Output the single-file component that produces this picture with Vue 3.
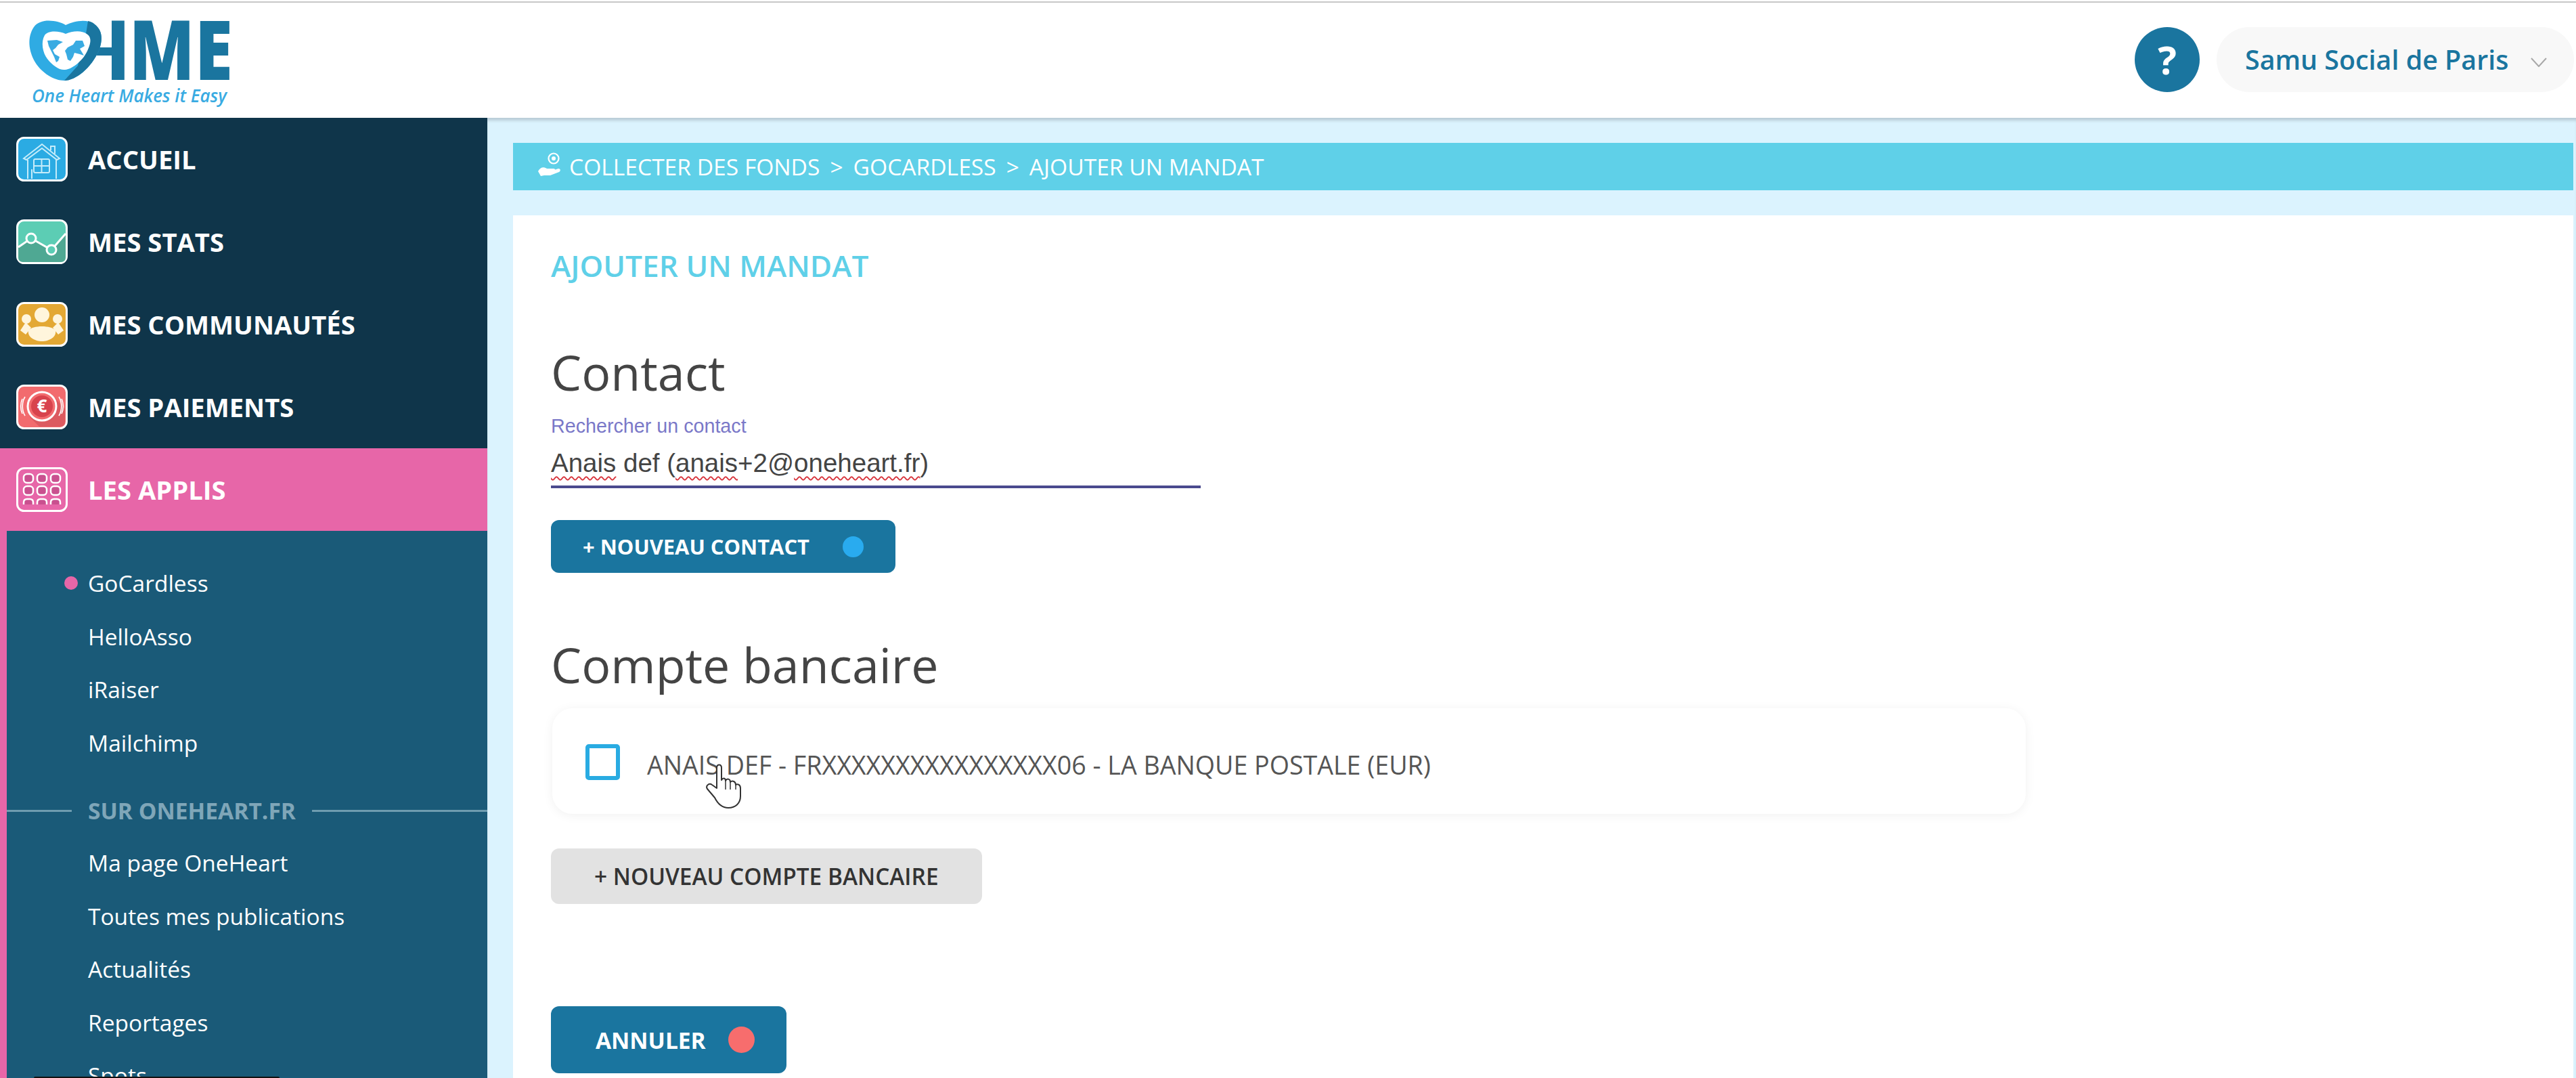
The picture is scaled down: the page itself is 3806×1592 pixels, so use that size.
<template>
  <div class="page">
    <header class="header">
      <div class="top-line"></div>
      <div class="header-row">
        <svg class="logo" width="360" height="160" viewBox="0 0 360 160">
          <defs>
            <clipPath id="logo-h">
              <path d="M143 70H165V0H200V130H165V82H143Z" />
            </clipPath>
          </defs>
          <g transform="translate(0,-4)">
            <g clip-path="url(#logo-h)">
              <text transform="translate(116,118) scale(0.8,1)" class="logo-letter">H</text>
            </g>
            <text transform="translate(191,118) scale(0.81,1)" class="logo-letter">M</text>
            <text transform="translate(288,118) scale(0.826,1)" class="logo-letter">E</text>
            <path fill="#2fabe3" d="M97 37C85 30 60 26 50 40C40 55 42 75 52 92C62 108 80 119 95 119C112 119 135 100 146 75C152 60 152 45 140 36C128 27 110 31 97 37Z" />
            <path fill="#1a759f" d="M130 31C134 32 137 33 140 36C152 45 152 60 146 75C135 100 112 119 95 119L115 97L127 50Z" />
            <path fill="#fff" d="M97 50C88 46 72 44 66 52C60 62 63 78 70 87C78 97 88 104 96 103C108 102 124 88 130 73C135 62 135 54 128 50C120 44 106 46 97 50Z" />
            <path fill="#39abe2" d="M70 60L84 59L93 62L86 66L82 71L78 74L81 80L88 84L86 90L83 92L80 84L76 76L72 68Z" />
            <path fill="#39abe2" d="M96 75L100 70L108 66L112 60L122 60L125 68L118 72L124 82L118 80L110 78L108 84L104 90L100 88L98 80Z" />
            <text x="47" y="151" class="logo-tag" textLength="288" lengthAdjust="spacingAndGlyphs">One Heart Makes it Easy</text>
          </g>
        </svg>
        <div class="header-right">
          <div class="help">?</div>
          <div class="org">
            <span>Samu Social de Paris</span>
            <svg width="24" height="14" viewBox="0 0 24 14"><path d="M1 1L12 13L23 1" fill="none" stroke="#a8a8a8" stroke-width="2" /></svg>
          </div>
        </div>
      </div>
    </header>

    <div class="layout">
      <aside class="sidebar">
        <nav>
          <div v-for="item in mainNav" :key="item.label" class="nav-row" :class="{ active: item.icon === 'apps' }">
            <svg class="nav-icon" width="76" height="66" viewBox="0 0 76 66">
              <rect x="1.5" y="1.5" width="73" height="63" rx="10" :fill="item.color" stroke="#fff" stroke-width="3" />
              <g v-if="item.icon === 'home'" fill="none" stroke="#c5ecfa" stroke-width="2">
                <path d="M11 32L38 11L64 32L60 34L38 17L15 34Z" />
                <path d="M51 20V14H57V25" />
                <path d="M17 34V62M59 34V62M23 48V62" />
                <rect x="26" y="33" width="23" height="20" rx="2" />
                <path d="M37.5 33V53M26 43H49" />
              </g>
              <g v-else-if="item.icon === 'stats'">
                <path fill="#4fa893" d="M3 41L22 28L52 45L73 21V56Q73 63 66 63H10Q3 63 3 56Z" />
                <path d="M3 41L22 28L52 45L73 21" fill="none" stroke="#fff" stroke-width="3" />
                <circle cx="22" cy="28" r="7" fill="#5ccdb4" stroke="#fff" stroke-width="3" />
                <circle cx="52" cy="45" r="7" fill="#5ccdb4" stroke="#fff" stroke-width="3" />
              </g>
              <g v-else-if="item.icon === 'people'" fill="#fff5dc">
                <circle cx="15" cy="25" r="7" />
                <circle cx="61" cy="25" r="7" />
                <path d="M6 42L14 30L22 38L14 48ZM70 42L62 30L54 38L62 48Z" />
                <circle cx="38" cy="19" r="12" stroke="#e3a834" stroke-width="2" />
                <path d="M18 42C24 34 52 34 58 42C60 52 48 58 38 58C28 58 16 52 18 42Z" />
              </g>
              <g v-else-if="item.icon === 'money'">
                <path fill="#dc5a60" d="M52 14L72 36V55Q72 62 65 62H34L20 48Z" />
                <circle cx="38" cy="32" r="21" fill="#f26b6e" stroke="#fff" stroke-width="3" />
                <circle cx="38" cy="32" r="16" fill="#d8434d" />
                <text x="38" y="41" class="euro">€</text>
                <path d="M13 18C8 26 8 38 13 46M9 21C6 28 6 36 9 43M63 18C68 26 68 38 63 46M67 21C70 28 70 36 67 43" fill="none" stroke="#fff" stroke-width="1.6" />
              </g>
              <g v-else fill="#c9508f" stroke="#fff" stroke-width="2.5">
                <template v-for="x in [11, 31, 51]" :key="x">
                  <rect :x="x" y="10" width="14" height="13" rx="5" />
                  <rect :x="x" y="28" width="14" height="13" rx="5" />
                  <path :d="`M${x} 55V52Q${x} 47 ${x + 5} 47H${x + 9}Q${x + 14} 47 ${x + 14} 52V55`" />
                </template>
              </g>
            </svg>
            <span class="nav-label">{{ item.label }}</span>
          </div>
        </nav>
        <div class="sub">
          <div v-for="(name, i) in apps" :key="name" class="sub-item">
            <span v-if="i === 0" class="sub-dot"></span>{{ name }}
          </div>
          <div class="sub-title"><span>SUR ONEHEART.FR</span></div>
          <div v-for="name in pages" :key="name" class="sub-item">{{ name }}</div>
        </div>
        <div class="tooltip-edge"></div>
      </aside>

      <main class="main">
        <div class="crumbs">
          <svg class="crumb-icon" width="34" height="36" viewBox="0 0 34 36">
            <circle cx="23" cy="10" r="7.5" fill="none" stroke="#fff" stroke-width="2.2" />
            <circle cx="23" cy="10" r="3" fill="#fff" />
            <path fill="#fff" d="M0 29C3 23 8 22 13 25L23 25C26 25 26 29 23 29L18 29L30 25C34 25 33 29 31 30L18 35H9L4 36Z" />
          </svg>
          <span>COLLECTER DES FONDS</span><span class="sep">&gt;</span>
          <span>GOCARDLESS</span><span class="sep">&gt;</span>
          <span>AJOUTER UN MANDAT</span>
        </div>

        <section class="card">
          <div class="card-title">AJOUTER UN MANDAT</div>

          <h2 class="heading contact-heading">Contact</h2>
          <div class="field-label">Rechercher un contact</div>
          <div class="field">
            <span class="typo">Anais</span> def (<span class="typo">anais</span>+2@<span class="typo">oneheart.fr</span>)
          </div>
          <div class="btn btn-blue btn-contact">
            <span>+ NOUVEAU CONTACT</span><i class="dot dot-blue"></i>
          </div>

          <h2 class="heading account-heading">Compte bancaire</h2>
          <div class="account">
            <span class="check"></span>
            <span class="account-text">ANAIS DEF - FRXXXXXXXXXXXXXXXX06 - LA BANQUE POSTALE (EUR)</span>
            <svg class="hand" width="54" height="66" viewBox="0 0 54 66">
              <path fill="#fff" stroke="#333" stroke-width="2" stroke-linejoin="round" d="M17 36V6C17 0 24 0 24 6V24C26 20 30 21 30 25C32 21 37 22 37 27C40 24 45 26 45 31C48 29 52 31 52 36V48C52 58 45 65 34 65C24 65 18 58 14 50L3 37C0 32 6 28 10 31Z" />
              <path fill="none" stroke="#333" stroke-width="1.5" d="M30 25V38M37 27V38M45 31V38" />
            </svg>
          </div>
          <div class="btn btn-grey">+ NOUVEAU COMPTE BANCAIRE</div>
          <div class="btn btn-blue btn-cancel">
            <span>ANNULER</span><i class="dot dot-red"></i>
          </div>
        </section>
      </main>
    </div>
  </div>
</template>

<script setup>
const mainNav = [
  { label: 'ACCUEIL', icon: 'home', color: '#2babe3' },
  { label: 'MES STATS', icon: 'stats', color: '#5ccdb4' },
  { label: 'MES COMMUNAUTÉS', icon: 'people', color: '#e3a834' },
  { label: 'MES PAIEMENTS', icon: 'money', color: '#f26b6e' },
  { label: 'LES APPLIS', icon: 'apps', color: '#e766a8' },
]
const apps = ['GoCardless', 'HelloAsso', 'iRaiser', 'Mailchimp']
const pages = ['Ma page OneHeart', 'Toutes mes publications', 'Actualités', 'Reportages', 'Spots']
</script>

<style>
html, body {
  overflow: hidden;
  background: #fff;
}
</style>

<style scoped>
.page {
  width: 3806px;
  height: 1592px;
  overflow: hidden;
  display: flex;
  flex-direction: column;
  font-family: "Open Sans", sans-serif;
}

.header {
  height: 174px;
  flex: none;
  background: #fff;
}

.top-line {
  height: 2px;
  margin-top: 2px;
  background: #c8c8c8;
}

.header-row {
  height: 170px;
  display: flex;
  justify-content: space-between;
}

.logo-letter {
  font-family: "Open Sans", sans-serif;
  font-weight: 800;
  font-size: 123px;
  fill: #1a759f;
}

.logo-tag {
  font-family: "Open Sans", sans-serif;
  font-style: italic;
  font-weight: 600;
  font-size: 27px;
  fill: #39abe2;
}

.header-right {
  display: flex;
  gap: 25px;
  padding: 36px 3px 0 0;
}

.help {
  width: 96px;
  height: 96px;
  border-radius: 50%;
  background: #1a759f;
  color: #fff;
  font-weight: 700;
  font-size: 58px;
  line-height: 96px;
  text-align: center;
}

.org {
  width: 528px;
  height: 96px;
  box-sizing: border-box;
  padding: 0 40px 0 42px;
  display: flex;
  align-items: center;
  justify-content: space-between;
  border-radius: 48px;
  background: #f8f8f8;
  color: #1a759f;
  font-weight: 600;
  font-size: 39.4px;
}

.org svg {
  margin-top: 8px;
}

.layout {
  flex: 1;
  display: flex;
  min-height: 0;
}

.sidebar {
  position: relative;
  width: 720px;
  flex: none;
  overflow: hidden;
  background: #0f354a;
}

.nav-row {
  height: 122px;
  box-sizing: border-box;
  padding-left: 24px;
  display: flex;
  align-items: center;
  gap: 30px;
}

.nav-row.active {
  background: #e766a8;
}

.nav-icon {
  flex: none;
}

.euro {
  font-family: "Open Sans", sans-serif;
  font-weight: 700;
  font-size: 26px;
  text-anchor: middle;
  fill: #fff;
}

.nav-label {
  color: #fff;
  font-weight: 700;
  font-size: 38.2px;
}

.sub {
  height: 810px;
  box-sizing: border-box;
  padding-top: 38px;
  border-left: 10px solid #e766a8;
  background: #1a5a78;
}

.sub-item {
  position: relative;
  height: 78.5px;
  padding-left: 120px;
  color: #fff;
  font-size: 33.5px;
  line-height: 78.5px;
}

.sub-dot {
  position: absolute;
  left: 85px;
  top: 29px;
  width: 20px;
  height: 20px;
  border-radius: 50%;
  background: #e766a8;
}

.sub-title {
  display: flex;
  align-items: center;
  height: 50px;
  margin: 36px 0 13px;
  color: #7fa6b8;
  font-weight: 700;
  font-size: 33.6px;
}

.sub-title::before {
  content: "";
  width: 96px;
  height: 3px;
  margin-right: 24px;
  background: #6f9cb0;
}

.sub-title::after {
  content: "";
  flex: 1;
  height: 3px;
  margin-left: 24px;
  background: #6f9cb0;
}

.tooltip-edge {
  position: absolute;
  left: 50px;
  bottom: 0;
  width: 363px;
  height: 2px;
  border-radius: 2px 2px 0 0;
  background: #111;
}

.main {
  flex: 1;
  min-width: 0;
  box-sizing: border-box;
  padding: 37px 4px 0 38px;
  background: #dbf3fe;
  box-shadow: inset 0 6px 4px -2px #b8cbd6;
}

.crumbs {
  height: 70px;
  box-sizing: border-box;
  padding-left: 37px;
  display: flex;
  align-items: center;
  gap: 15px;
  background: #5fd0e8;
  color: #fff;
  font-size: 33.6px;
}

.crumb-icon {
  margin: -8px -3px 0 0;
}

.card {
  height: 1300px;
  box-sizing: border-box;
  margin-top: 37px;
  padding: 44px 56px 0;
  background: #fff;
}

.card-title {
  color: #5fd0e8;
  font-weight: 600;
  font-size: 44.2px;
  line-height: 60px;
}

.heading {
  margin: 0;
  color: #444;
  font-weight: 400;
  font-size: 71.7px;
  line-height: 90px;
}

.contact-heading {
  margin-top: 82px;
}

.field-label {
  margin-top: 17px;
  color: #7a78c8;
  font-family: "Liberation Sans", Arial, sans-serif;
  font-size: 28.7px;
  line-height: 36px;
}

.field {
  width: 960px;
  box-sizing: border-box;
  padding: 12px 0 8px;
  border-bottom: 4px solid #4a4a8e;
  color: #444;
  font-family: "Liberation Sans", Arial, sans-serif;
  font-size: 38.5px;
  line-height: 50px;
}

.typo {
  text-decoration: underline wavy #d8343c 2px;
  text-underline-offset: 6px;
}

.btn {
  box-sizing: border-box;
  display: flex;
  align-items: center;
  border-radius: 12px;
  font-weight: 700;
}

.btn-blue {
  background: #1a759f;
  color: #fff;
}

.btn-contact {
  width: 509px;
  height: 78px;
  margin-top: 47px;
  padding: 0 47px;
  justify-content: space-between;
  font-size: 30.9px;
}

.btn-cancel {
  width: 348px;
  height: 99px;
  margin-top: 151px;
  padding: 0 47px 0 66px;
  justify-content: space-between;
  font-size: 33.5px;
}

.btn-grey {
  width: 637px;
  height: 82px;
  margin-top: 51px;
  padding-left: 64px;
  background: #e2e2e2;
  color: #333;
  font-weight: 600;
  font-size: 33.4px;
}

.dot {
  flex: none;
  display: block;
  border-radius: 50%;
}

.dot-blue {
  width: 31px;
  height: 31px;
  background: #29abef;
}

.dot-red {
  width: 39px;
  height: 39px;
  background: #f76d6d;
}

.account-heading {
  margin-top: 90px;
}

.account {
  position: relative;
  width: 2177px;
  height: 156px;
  box-sizing: border-box;
  margin: 20px 0 0 2px;
  padding-left: 49px;
  display: flex;
  align-items: center;
  gap: 40px;
  border-radius: 30px;
  box-shadow: 0 2px 16px rgba(0, 0, 0, 0.06);
}

.check {
  width: 51px;
  height: 53px;
  margin-top: 3px;
  box-sizing: border-box;
  border: 6px solid #29abe2;
  border-radius: 5px;
}

.account-text {
  margin-top: 10px;
  color: #555;
  font-size: 37.6px;
}

.hand {
  position: absolute;
  left: 226px;
  top: 82px;
}
</style>
